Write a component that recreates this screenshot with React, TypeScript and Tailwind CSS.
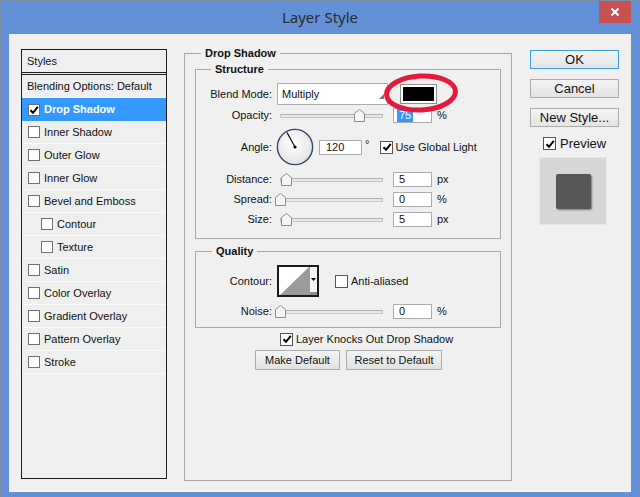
import React from "react";

const txt = "font-['Liberation_Sans',Arial,sans-serif]";

function CheckMark() {
  return (
    <svg width="10" height="10" viewBox="0 0 10 10" className="block">
      <path d="M1.5 5.2 L4 7.8 L8.8 1.8" fill="none" stroke="#000" strokeWidth="2" />
    </svg>
  );
}

function SmallBox({ checked }: { checked?: boolean }) {
  return (
    <div className="w-[12px] h-[12px] shrink-0 bg-white border border-[#707070] flex items-center justify-center">
      {checked && <CheckMark />}
    </div>
  );
}

function BigBox({ checked }: { checked?: boolean }) {
  return (
    <div className="w-[13px] h-[13px] shrink-0 bg-white border border-[#555] flex items-center justify-center">
      {checked && <CheckMark />}
    </div>
  );
}

function Slider({ pos }: { pos: number }) {
  return (
    <div className="relative ml-[5px] w-[111px] h-[20px] flex items-center">
      <div className="ml-[3px] mt-[2px] w-[103px] h-[4px] border border-[#c6c6c6] border-t-[#b0b0b0] bg-[#e8e8e8]" />
      <svg
        className="absolute top-[4px]"
        style={{ left: pos - 5 }}
        width="11"
        height="13"
        viewBox="0 0 11 13"
      >
        <path d="M0.5 12.5 V4.5 L5.5 0.5 L10.5 4.5 V12.5 Z" fill="#f6f6f6" stroke="#8c8c8c" />
      </svg>
    </div>
  );
}

function Field({ value, selected }: { value: string; selected?: boolean }) {
  return (
    <div className="ml-[5px] w-[39px] h-[15px] bg-white border border-[#a9abb2] flex items-center pl-[3px] text-[11px] leading-none">
      {selected ? (
        <span className="bg-[#3399ff] text-white px-[2px] py-[1px]">{value}</span>
      ) : (
        <span className="pl-[2px]">{value}</span>
      )}
    </div>
  );
}

function Label({ children }: { children: React.ReactNode }) {
  return <div className="w-[76px] text-right text-[11px] leading-none shrink-0">{children}</div>;
}

function Dial() {
  return (
    <svg width="38" height="38" viewBox="0 0 38 38" className="ml-[4px] shrink-0">
      <defs>
        <radialGradient id="dialg" cx="45%" cy="40%" r="65%">
          <stop offset="0" stopColor="#ffffff" />
          <stop offset="1" stopColor="#e0e0e0" />
        </radialGradient>
      </defs>
      <circle cx="19" cy="19" r="17.6" fill="url(#dialg)" stroke="#34476f" strokeWidth="1.4" />
      <line x1="19" y1="19" x2="11" y2="4.5" stroke="#000" strokeWidth="1.2" />
      <circle cx="19" cy="19" r="1.6" fill="#000" />
    </svg>
  );
}

function Contour() {
  return (
    <div className="ml-[5px] w-[42px] h-[32px] border-2 border-[#1a1a1a] bg-white flex shrink-0">
      <svg width="30" height="28" viewBox="0 0 30 28" className="block">
        <polygon points="1,28 30,0 30,28" fill="#9b9b9b" />
      </svg>
      <div className="flex-1 border-l border-[#9a9a9a] bg-[#f4f4f4] flex flex-col">
        <div className="flex-1 flex items-center justify-center">
          <svg width="5" height="3" viewBox="0 0 5 3">
            <polygon points="0,0 5,0 2.5,3" fill="#000" />
          </svg>
        </div>
        <div className="h-[3px] bg-[#8f8f8f]" />
      </div>
    </div>
  );
}

function WinButton({ children, primary }: { children: React.ReactNode; primary?: boolean }) {
  return (
    <div
      className={
        primary
          ? "w-[89px] h-[19px] border border-[#3c9ae6] bg-gradient-to-b from-[#f4f4f4] to-[#e4e4e4] flex items-center justify-center text-[13px] leading-none text-[#111]"
          : "w-[89px] h-[19px] border border-[#acacac] bg-gradient-to-b from-[#f4f4f4] to-[#e4e4e4] flex items-center justify-center text-[13px] leading-none text-[#111]"
      }
    >
      {children}
    </div>
  );
}

function SmallButton({ children, w }: { children: React.ReactNode; w: string }) {
  return (
    <div
      className={`${w} h-[20px] border border-[#acacac] bg-gradient-to-b from-[#f4f4f4] to-[#e2e2e2] flex items-center justify-center text-[11px] leading-none`}
    >
      {children}
    </div>
  );
}

const styles: { label: string; checked?: boolean; sel?: boolean; indent?: boolean }[] = [
  { label: "Drop Shadow", checked: true, sel: true },
  { label: "Inner Shadow" },
  { label: "Outer Glow" },
  { label: "Inner Glow" },
  { label: "Bevel and Emboss" },
  { label: "Contour", indent: true },
  { label: "Texture", indent: true },
  { label: "Satin" },
  { label: "Color Overlay" },
  { label: "Gradient Overlay" },
  { label: "Pattern Overlay" },
  { label: "Stroke" },
];

export default function App() {
  return (
    <div className={`relative w-[640px] h-[497px] bg-[#6490d8] border-x border-t border-[#7d8ea8] overflow-hidden text-[#111] ${txt}`}>
      {/* title bar */}
      <div className="relative h-[33px] flex items-center justify-center">
        <span className="text-[15px] text-[#2b2b2b] font-['Noto_Sans',sans-serif] leading-none -mt-[1px]">
          Layer Style
        </span>
        <div className="absolute right-[8px] top-0 w-[32px] h-[22px] bg-[#c75050] flex items-center justify-center">
          <svg width="10" height="10" viewBox="0 0 10 10">
            <path d="M1.5 1.5 L8.5 8.5 M8.5 1.5 L1.5 8.5" stroke="#fff" strokeWidth="2" />
          </svg>
        </div>
      </div>

      {/* client */}
      <div className="mx-[8px] h-[458px] bg-[#f0f0f0] border-b border-[#fafafa] flex items-start pl-[12px]">
        {/* styles list */}
        <div className="mt-[15px] w-[146px] h-[430px] border border-[#1c1c1c] bg-[#efefef] text-[11px] leading-none flex flex-col">
          <div className="h-[25px] shrink-0 flex items-center pl-[5px] border-b-[3px] border-double border-[#1c1c1c]">Styles</div>
          <div className="h-[23px] shrink-0 flex items-center pl-[5px] border-b border-[#fafafa]">Blending Options: Default</div>
          {styles.map((s) => (
            <div
              key={s.label}
              className={
                (s.sel
                  ? "bg-[#3399ff] text-white font-bold "
                  : "border-b border-[#fafafa] ") +
                (s.indent ? "pl-[19px] " : "pl-[6px] ") +
                "h-[23px] shrink-0 flex items-center"
              }
            >
              <SmallBox checked={s.checked} />
              <span className="ml-[4px]">{s.label}</span>
            </div>
          ))}
        </div>

        {/* Drop Shadow group */}
        <fieldset className="ml-[17px] mt-[12px] w-[328px] h-[435px] border border-[#a8a8a8] px-[10px] shrink-0">
          <legend className="ml-[6px] px-[4px] text-[11px] font-bold leading-[14px]">Drop Shadow</legend>

          <fieldset className="mt-[2px] border border-[#a8a8a8] pb-[9px]">
            <legend className="ml-[15px] px-[4px] text-[11px] font-bold leading-[14px]">Structure</legend>
            <div className="pt-[7px] flex flex-col">
              <div className="flex items-center h-[22px]">
                <Label>Blend Mode:</Label>
                <div className="relative ml-[5px] w-[111px] h-[22px] bg-white border border-[#abadb3] flex items-center pl-[4px] text-[11px] leading-none">
                  Multiply
                  <svg className="absolute right-[3px] bottom-[5px]" width="5" height="5" viewBox="0 0 5 5">
                    <polygon points="5,0 5,5 0,5" fill="#777" />
                  </svg>
                </div>
                <div className="ml-[12px] w-[37px] h-[20px] border border-[#8e8e8e] bg-white p-[2px]">
                  <div className="w-full h-full bg-black" />
                </div>
              </div>
              <div className="flex items-center h-[20px]">
                <Label>Opacity:</Label>
                <Slider pos={82} />
                <Field value="75" selected />
                <span className="ml-[5px] text-[11px] leading-none">%</span>
              </div>
              <div className="flex items-center h-[44px]">
                <Label>Angle:</Label>
                <Dial />
                <div className="ml-[5px] w-[43px] h-[15px] bg-white border border-[#a9abb2] flex items-center pl-[6px] text-[11px] leading-none">
                  120
                </div>
                <span className="ml-[3px] -mt-[6px] text-[11px] leading-none">°</span>
                <div className="ml-[11px]">
                  <BigBox checked />
                </div>
                <span className="ml-[2px] text-[11px] leading-none whitespace-nowrap">Use Global Light</span>
              </div>
              <div className="flex items-center h-[20px]">
                <Label>Distance:</Label>
                <Slider pos={9} />
                <Field value="5" />
                <span className="ml-[5px] text-[11px] leading-none">px</span>
              </div>
              <div className="flex items-center h-[20px]">
                <Label>Spread:</Label>
                <Slider pos={3} />
                <Field value="0" />
                <span className="ml-[5px] text-[11px] leading-none">%</span>
              </div>
              <div className="flex items-center h-[20px]">
                <Label>Size:</Label>
                <Slider pos={9} />
                <Field value="5" />
                <span className="ml-[5px] text-[11px] leading-none">px</span>
              </div>
            </div>
          </fieldset>

          <fieldset className="mt-[5px] border border-[#a8a8a8] pb-[6px]">
            <legend className="ml-[16px] px-[4px] text-[11px] font-bold leading-[14px]">Quality</legend>
            <div className="pt-[7px] flex flex-col">
              <div className="flex items-center h-[32px]">
                <Label>Contour:</Label>
                <Contour />
                <div className="ml-[16px]">
                  <BigBox />
                </div>
                <span className="ml-[3px] text-[11px] leading-none">Anti-aliased</span>
              </div>
              <div className="mt-[4px] flex items-center h-[20px]">
                <Label>Noise:</Label>
                <Slider pos={3} />
                <Field value="0" />
                <span className="ml-[5px] text-[11px] leading-none">%</span>
              </div>
            </div>
          </fieldset>

          <div className="mt-[3px] ml-[85px] h-[16px] flex items-center">
            <BigBox checked />
            <span className="ml-[3px] text-[11px] leading-none whitespace-nowrap">Layer Knocks Out Drop Shadow</span>
          </div>
          <div className="mt-[3px] ml-[60px] flex gap-[6px]">
            <SmallButton w="w-[85px]">Make Default</SmallButton>
            <SmallButton w="w-[96px]">Reset to Default</SmallButton>
          </div>
        </fieldset>

        {/* right column */}
        <div className="ml-[18px] mt-[16px] w-[89px] flex flex-col shrink-0">
          <WinButton primary>OK</WinButton>
          <div className="mt-[10px]">
            <WinButton>Cancel</WinButton>
          </div>
          <div className="mt-[10px]">
            <WinButton>New Style...</WinButton>
          </div>
          <div className="mt-[10px] ml-[13px] flex items-center h-[13px]">
            <BigBox checked />
            <span className="ml-[4px] text-[13px] leading-none">Preview</span>
          </div>
          <div className="mt-[7px] ml-[9px] w-[68px] h-[68px] bg-[#d6d6d6] border border-[#e6e6e6] flex items-center justify-center">
            <div className="w-[35px] h-[35px] bg-[#575757] rounded-[2px] shadow-[1px_1px_2px_rgba(0,0,0,0.45)]" />
          </div>
        </div>
      </div>

      {/* red highlight ellipse */}
      <svg className="absolute left-[382px] top-[71px] pointer-events-none" width="76" height="42" viewBox="0 0 76 42">
        <ellipse cx="38" cy="21" rx="34.5" ry="17" fill="none" stroke="#e8173c" strokeWidth="5" transform="rotate(-3 38 21)" />
      </svg>
    </div>
  );
}
